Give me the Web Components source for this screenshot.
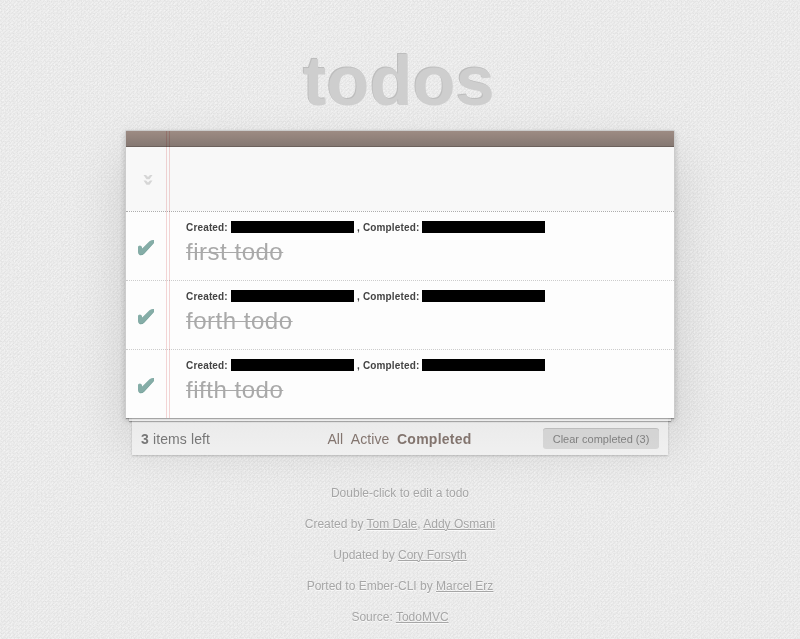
<!DOCTYPE html>
<html lang="en">
<head>
<meta charset="utf-8">
<title>todos</title>
<style>
html{height:100%;overflow:hidden;background:#eaeaea}
body{margin:0;height:639px;overflow:hidden;font:14px/1.4 "Liberation Sans",Arial,sans-serif;color:#4d4d4d}
</style>
</head>
<body>
<todo-page></todo-page>
<script>
const define = (name, html) => customElements.define(name, class extends HTMLElement {
  connectedCallback() {
    if (this.shadowRoot) return;
    const t = document.createElement('template');
    t.innerHTML = html;
    this.attachShadow({mode: 'open'}).append(t.content.cloneNode(true));
  }
});

define('paper-texture', `
<style>:host{position:absolute;inset:0;z-index:-3;pointer-events:none}svg{display:block;width:100%;height:100%}</style>
<svg aria-hidden="true"><defs>
<pattern id="weave" width="4" height="4" patternUnits="userSpaceOnUse"><path fill="#000" fill-opacity=".022" d="M0 0h1v1H0zM1 1h1v1H1zM2 2h1v1H2zM3 1h1v1H3zM1 3h1v1H1z"/><path fill="#fff" fill-opacity=".2" d="M2 0h1v1H2zM0 2h1v1H0zM3 3h1v1H3z"/></pattern>
<filter id="grain" x="0" y="0" width="100%" height="100%" color-interpolation-filters="sRGB"><feTurbulence type="fractalNoise" baseFrequency=".7" numOctaves="2" seed="4"/><feColorMatrix values=".09 0 0 0 .877  .09 0 0 0 .877  .09 0 0 0 .877  0 0 0 0 1"/></filter></defs>
<rect width="100%" height="100%" filter="url(#grain)"/><rect width="100%" height="100%" fill="url(#weave)"/></svg>`);

define('todo-title', `
<style>:host{display:block;height:130px;box-sizing:border-box;padding-top:41px;text-align:center;font-size:70px;font-weight:bold;line-height:80px}
h1{font:inherit;letter-spacing:.3px;margin:0 2px 0 0;color:#cecece;text-shadow:-1px -1px #bdbdbd}</style>
<h1><slot></slot></h1>`);

define('todo-card', `
<style>
:host{display:block;position:relative;box-sizing:border-box;width:550px;height:288px;margin:0 auto;border:1px solid #ccc;border-bottom:0;border-radius:2px 2px 0 0;background:#fdfdfd}
:host::before{content:"";position:absolute;z-index:-2;inset:0 -1px;box-shadow:0 2px 6px rgba(0,0,0,.2),0 25px 50px rgba(0,0,0,.13)}
.rule{position:absolute;left:40px;top:0;bottom:0;width:2px;border:solid #f5d6d6;border-width:0 1px;mix-blend-mode:multiply}
.strip{height:15px;border-bottom:1px solid #6c615c;background:linear-gradient(#9d8b83,#857872)}
.entry{height:64px;background:rgba(0,0,0,.02);display:flex;align-items:center}
.entry svg{width:10px;height:12px;margin:1px 0 0 17px}
.list{border-top:1px dotted #adadad}
</style>
<div class="rule"></div><div class="strip"></div>
<div class="entry"><svg viewBox="0 0 10 12" fill="#d6d6d6"><path d="M.5 1H3L5 3L7 1H9.500L6.500 5.300H3.500zM.5 6.500H3L5 8.500L7 6.500H9.500L6.500 10.800H3.500z"/></svg></div>
<div class="list"><slot></slot></div>`);

define('todo-item', `
<style>
:host{display:grid;grid-template-columns:60px 1fr;height:68px;border-bottom:1px dotted #ccc}
:host(:last-child){border-bottom:0}
svg{display:block;width:18px;height:18px;margin:27px 0 0 11px}
.meta{display:flex;align-items:center;height:12px;margin-top:9px;color:#444;font-size:10px;font-weight:bold;line-height:12px;letter-spacing:.16px;white-space:pre}
.meta span{padding-top:2px}
.bar{width:123px;height:12px;background:#000}
.c{width:45px}.meta .d{width:68px;box-sizing:border-box;padding-left:3px}
label{display:inline-block;margin-top:4px;font-size:24px;line-height:30px;letter-spacing:.52px;color:#a9a9a9;text-decoration:line-through;text-decoration-thickness:1px}
</style>
<svg viewBox="0 0 18 18"><path fill="#75a09a" d="M1 12V9Q1 7 3 7Q4.800 7 5.200 10.200L12.500 3Q14.500 1.300 17 1.500V4L7.500 14.500Q5.500 16.600 3 16.300Q1 15.500 1 12z"/><path fill="#85ada7" d="M1 11.500V8.500Q1 6.500 3 6.500Q4.800 6.500 5.200 9.500L12.500 2.300Q14.500 .8 17 1V3.200L7.500 13.700Q5.500 15.800 3 15.500Q1 14.800 1 11.500z"/></svg>
<div><div class="meta"><span class="c">Created:</span><i class="bar"></i><span class="d">, Completed:</span><i class="bar"></i></div><label><slot></slot></label></div>`);

define('todo-footer', `
<style>
:host{display:grid;grid-template-columns:1fr auto 1fr;align-items:center;position:relative;box-sizing:border-box;width:548px;height:38px;margin:0 auto;padding:4px 15px 0;color:#777;line-height:20px}
:host::before{content:"";position:absolute;z-index:-1;left:0;right:0;top:-50px;height:50px;box-shadow:0 1px 1px rgba(0,0,0,.3),0 6px 0 -3px rgba(255,255,255,.8),0 7px 1px -3px rgba(0,0,0,.3),0 43px 0 -6px rgba(255,255,255,.8),0 44px 2px -6px rgba(0,0,0,.2)}
:host::after{content:"";position:absolute;z-index:-1;left:6px;right:6px;top:5px;height:32px;background:linear-gradient(#ebebeb,#f0f0f0)}
.count{letter-spacing:.12px}
nav{display:flex;gap:7.500px;color:#83756f;margin-right:1px;letter-spacing:.1px}
nav b{letter-spacing:.25px}
button{justify-self:end;font:11px/20px "Liberation Sans",Arial,sans-serif;color:#808080;border:0;margin:0;padding:0;width:116px;height:20px;background:rgba(0,0,0,.1);border-radius:3px;box-shadow:0 -1px 0 rgba(0,0,0,.2)}
</style>
<span class="count"><b>3</b> items left</span>
<nav><span>All</span><span>Active</span><b>Completed</b></nav>
<button>Clear completed (3)</button>`);

define('todo-info', `
<style>
:host{display:grid;grid-auto-rows:17px;gap:14px;padding-top:29px;text-align:center;font-size:12px;line-height:17px;color:#a6a6a6;text-shadow:0 1px 0 rgba(255,255,255,.7)}
p{margin:0}p:first-child{letter-spacing:.12px}a{text-decoration:underline;text-underline-offset:1px;text-decoration-thickness:1px}
</style>
<p>Double-click to edit a todo</p>
<p>Created by <a>Tom Dale</a>, <a>Addy Osmani</a></p>
<p>Updated by <a>Cory Forsyth</a></p>
<p>Ported to Ember-CLI by <a>Marcel Erz</a></p>
<p>Source: <a>TodoMVC</a></p>`);

define('todo-page', `
<style>:host{display:block;position:relative;isolation:isolate;height:639px;overflow:hidden}</style>
<paper-texture></paper-texture>
<todo-title>todos</todo-title>
<todo-card><todo-item>first todo</todo-item><todo-item>forth todo</todo-item><todo-item>fifth todo</todo-item></todo-card>
<todo-footer></todo-footer>
<todo-info></todo-info>`);
</script>
</body>
</html>
